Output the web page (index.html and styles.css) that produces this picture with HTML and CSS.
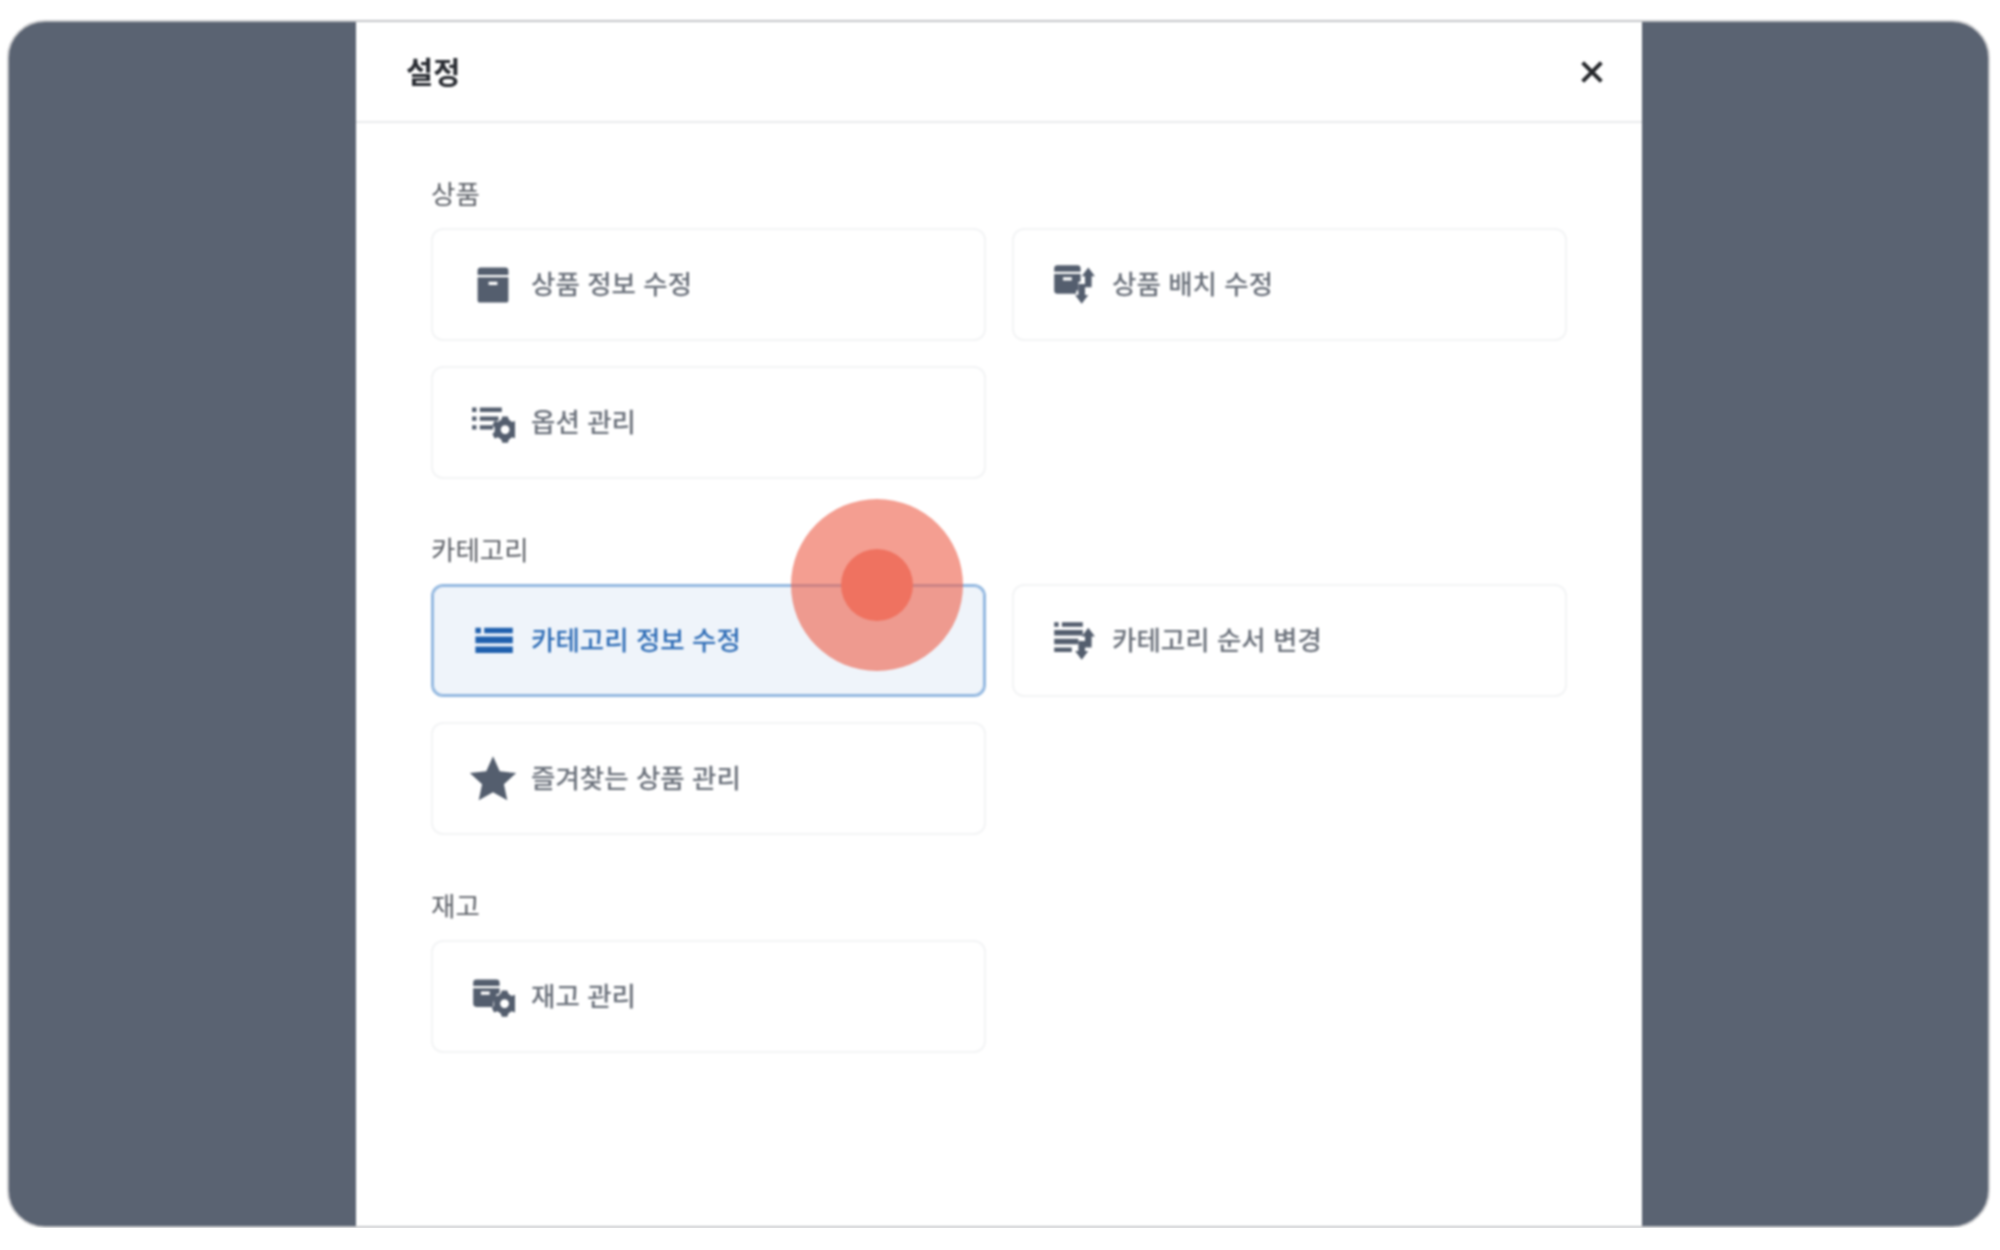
FILE: index.html
```html
<!DOCTYPE html>
<html lang="ko">
<head>
	<title>설정</title>
	<meta charset="utf-8" />
	<link rel="stylesheet" href="styles.css">
</head>
<body>
<div class="frame">
	<section class="modal">
		<header class="modal-head">
			<h1 class="modal-title">설정</h1>
			<svg class="close" viewBox="0 0 24 24"><path d="M5 5L19 19M19 5L5 19"/></svg>
		</header>
		<div class="modal-body">
			<h2 class="group-title">상품</h2>
			<ul class="cards">
				<li class="card">
					<svg class="icon" viewBox="0 0 40 40"><path d="M9 4h22a3 3 0 0 1 3 3v4H6V7a3 3 0 0 1 3-3zM6 13h28v21a2 2 0 0 1-2 2H8a2 2 0 0 1-2-2zM16 17v3h8v-3z" fill-rule="evenodd"/></svg>
					<span>상품 정보 수정</span>
				</li>
				<li class="card">
					<svg class="icon" viewBox="0 0 40 40"><path d="M5 2h18a3 3 0 0 1 3 3v3H2V5a3 3 0 0 1 3-3zM2 10h24v7h-2v8h-2v3H5a3 3 0 0 1-3-3zM10 13v3h8v-3z" fill-rule="evenodd"/><path d="M33 4l6 8h-3v10h-6V12h-3zM24 19h6v10h3l-6 8-6-8h3z"/></svg>
					<span>상품 배치 수정</span>
				</li>
				<li class="card">
					<svg class="icon" viewBox="0 0 40 40"><path d="M1 6h4v4H1zM8 6h20v4H8zM1 14h4v4H1zM8 14h17v4H8zM1 22h4v4H1zM8 22h12v4H8z"/><path d="M28 13h5l1 3 3 2 3-1 2 4-2 2v4l2 2-2 4-3-1-3 2-1 3h-5l-1-3-3-2-3 1-2-4 2-2v-4l-2-2 2-4 3 1 3-2zM30.500 21a4 4 0 1 0 .01 0z" fill-rule="evenodd" transform="translate(.5 1)"/></svg>
					<span>옵션 관리</span>
				</li>
			</ul>
			<h2 class="group-title">카테고리</h2>
			<ul class="cards">
				<li class="card card-active">
					<svg class="icon" viewBox="0 0 40 40"><path d="M4 8h5v5H4zM12 8h26v5H12zM4 16h34v6H4zM4 25h34v6H4z"/></svg>
					<span>카테고리 정보 수정</span>
				</li>
				<li class="card">
					<svg class="icon" viewBox="0 0 40 40"><path d="M2 3h4v4H2zM9 3h19v4H9zM2 10h26v5H2zM2 18h22v5H2zM2 26h16v4H2z"/><path d="M33 8l6 8h-3v10h-6V16h-3zM24 20h6v9h3l-6 8-6-8h3z"/></svg>
					<span>카테고리 순서 변경</span>
				</li>
				<li class="card">
					<svg class="icon icon-large" viewBox="0 0 40 40"><path d="M20 1l5.600 12.600 13.700 1.500-10.200 9.200 2.800 13.500L20 31l-11.900 6.800 2.800-13.500L.7 15.100l13.700-1.500z"/></svg>
					<span>즐겨찾는 상품 관리</span>
				</li>
			</ul>
			<h2 class="group-title">재고</h2>
			<ul class="cards">
				<li class="card">
					<svg class="icon" viewBox="0 0 40 40"><path d="M5 4h18a3 3 0 0 1 3 3v3H2V7a3 3 0 0 1 3-3zM2 12h24v5h-2l-3 3-1 9H5a3 3 0 0 1-3-3zM9 15v3h8v-3z" fill-rule="evenodd"/><path d="M28 13h5l1 3 3 2 3-1 2 4-2 2v4l2 2-2 4-3-1-3 2-1 3h-5l-1-3-3-2-3 1-2-4 2-2v-4l-2-2 2-4 3 1 3-2zM30.500 21a4 4 0 1 0 .01 0z" fill-rule="evenodd" transform="translate(0 1)"/></svg>
					<span>재고 관리</span>
				</li>
			</ul>
		</div>
	</section>
	<div class="touch"><div class="touch-dot"></div></div>
</div>
</body>
</html>
```

FILE: styles.css
```css
body {
	margin: 0;
	background: #fff;
	font-family: "Noto Sans CJK KR", "Noto Sans", sans-serif;
}
.frame {
	position: relative;
	box-sizing: border-box;
	width: 1983px;
	height: 1208px;
	margin: 20px 0 0 7px;
	padding-left: 347px;
	overflow: hidden;
	background: #5a6372;
	border: 2px solid #c4c5c8;
	border-radius: 38px;
	filter: blur(0.9px);
}
.modal {
	width: 1286px;
	height: 100%;
	background: #fff;
}
.modal-head {
	display: flex;
	align-items: center;
	justify-content: space-between;
	box-sizing: border-box;
	height: 101px;
	padding: 0 34px 0 50px;
	border-bottom: 2px solid #e9eaec;
}
.modal-title {
	margin: 0 0 4px;
	font-size: 29.5px;
	font-weight: 700;
	color: #2a2d33;
}
.close {
	width: 32px;
	height: 32px;
	fill: none;
	stroke: #26282c;
	stroke-width: 3;
}
.modal-body {
	padding: 48px 75px 0;
}
.group-title {
	margin: 0 0 13px;
	height: 44px;
	line-height: 44px;
	font-size: 26.5px;
	font-weight: 400;
	color: #5b5f66;
}
.cards {
	display: grid;
	grid-template-columns: 555px 555px;
	gap: 25px 26px;
	margin: 0 0 48px;
	padding: 0;
	list-style: none;
}
.card {
	display: flex;
	align-items: center;
	gap: 16px;
	box-sizing: border-box;
	height: 113px;
	padding: 0 0 0 38px;
	background: #fff;
	border: 2px solid #f3f4f5;
	border-radius: 12px;
	font-size: 26.5px;
	font-weight: 500;
	color: #6b717b;
}
.card span {
	margin-bottom: 4px;
}
.icon {
	width: 44px;
	height: 44px;
	flex: none;
	fill: #545e6e;
}
.icon-large {
	width: 48px;
	height: 48px;
	margin: 0 -2px;
}
.card-active {
	background: #eff4fa;
	border-color: #93b8e0;
	box-shadow: inset 0 0 0 1px #93b8e0;
	color: #2f6db6;
}
.card-active .icon {
	fill: #1f60ae;
}
.touch {
	position: absolute;
	left: 782px;
	top: 477px;
	display: flex;
	align-items: center;
	justify-content: center;
	width: 172px;
	height: 172px;
	background: rgba(238, 98, 78, 0.62);
	border-radius: 50%;
}
.touch-dot {
	width: 72px;
	height: 72px;
	background: #ef7260;
	border-radius: 50%;
}
```
